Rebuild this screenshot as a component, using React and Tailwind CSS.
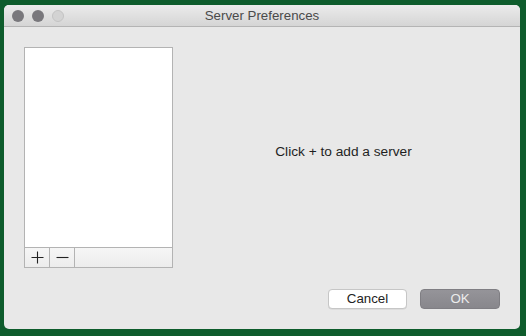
export default function App() {
  return (
    <div
      className="w-[526px] h-[336px] bg-[#0e5c2c] pt-[5px] pl-[4px] overflow-hidden"
      style={{ fontFamily: '"Liberation Sans", Arial, sans-serif' }}
    >
      <div className="w-[516px] h-[324px] bg-[#e8e8e8] rounded-[5px] flex flex-col overflow-hidden">
        <div className="relative h-[22px] flex items-center justify-center bg-gradient-to-b from-[#ebebeb] to-[#d5d5d5] border-b border-[#b4b4b4]">
          <div className="absolute left-[8px] top-[5px] flex gap-[8px]">
            <div className="w-[12px] h-[12px] rounded-full bg-[#79787c]" />
            <div className="w-[12px] h-[12px] rounded-full bg-[#79787c]" />
            <div className="w-[12px] h-[12px] rounded-full bg-[#d3d3d3] border border-[#c3c3c3]" />
          </div>
          <span className="text-[13.3px] text-[#4a4a4a]">Server Preferences</span>
        </div>
        <div className="flex-1 flex flex-col px-[20px] pt-[20px] pb-[20px]">
          <div className="flex h-[221px]">
            <div className="w-[149px] h-full flex flex-col border border-[#b3b3b3] bg-white">
              <div className="flex-1" />
              <div className="h-[20px] flex border-t border-[#b3b3b3] bg-gradient-to-b from-[#f6f6f6] to-[#ececec]">
                <div className="w-[25px] flex items-center justify-center border-r border-[#b3b3b3] text-[#222]">
                  <svg width="13" height="13" viewBox="0 0 13 13">
                    <path d="M6.5 0.5v12M0.5 6.5h12" stroke="#222" strokeWidth="1.1" />
                  </svg>
                </div>
                <div className="w-[25px] flex items-center justify-center border-r border-[#b3b3b3]">
                  <svg width="13" height="13" viewBox="0 0 13 13">
                    <path d="M0.5 6.5h12" stroke="#222" strokeWidth="1.1" />
                  </svg>
                </div>
                <div className="flex-1" />
              </div>
            </div>
            <div className="flex-1 flex items-center justify-center pl-[14px] pb-[10px]">
              <span className="text-[13.7px] text-[#1f1f1f]">Click + to add a server</span>
            </div>
          </div>
          <div className="mt-[21px] flex justify-end gap-[13px]">
            <div className="w-[79px] h-[20px] rounded-[4px] bg-white border border-[#c6c6c6] flex items-center justify-center text-[13.3px] text-[#222] shadow-[0_0.5px_0_rgba(0,0,0,0.1)]">
              Cancel
            </div>
            <div className="w-[80px] h-[20px] rounded-[4px] bg-gradient-to-b from-[#959499] to-[#88878c] border border-[#7f7e83] flex items-center justify-center text-[13.3px] text-[#ececec]">
              OK
            </div>
          </div>
        </div>
      </div>
    </div>
  );
}
